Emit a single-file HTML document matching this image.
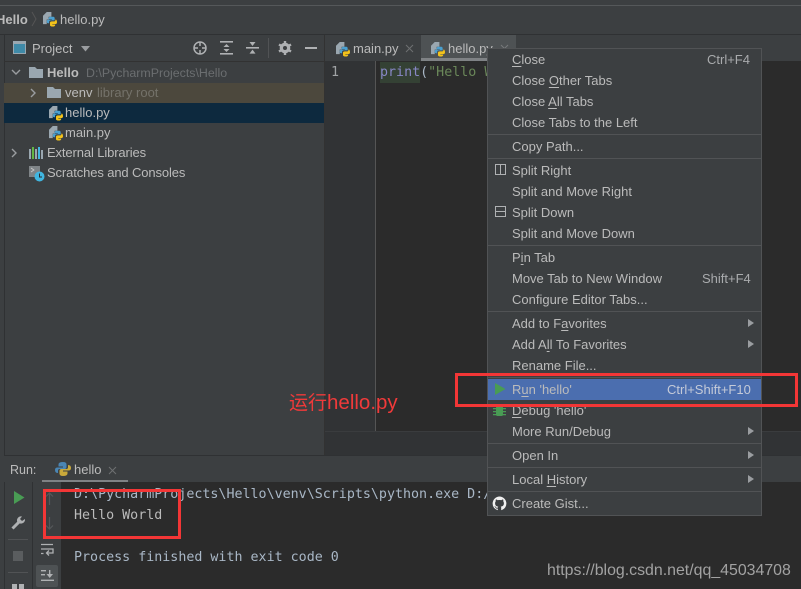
<!DOCTYPE html>
<html><head><meta charset="utf-8">
<style>
html,body{margin:0;padding:0;background:#3c3f41}
#r{position:relative;width:801px;height:589px;overflow:hidden;background:#3c3f41;font-family:"Liberation Sans","Noto Sans CJK SC",sans-serif;font-size:13px;color:#bbbbbb}
#r div{position:absolute}
.t{white-space:pre;line-height:20px;height:20px}
.n{letter-spacing:-.12px}
.m{font-family:"DejaVu Sans Mono","Liberation Mono",monospace;font-size:13.33px;white-space:pre;line-height:20px;height:20px}
u{text-underline-offset:2px}
.s{position:absolute;left:0;right:0;height:1px;background:#515355}
svg{position:absolute;overflow:visible}
#menu .t{margin-top:1px}
</style></head><body>
<svg width="0" height="0" style="position:absolute"><defs>
<g id="py">
<path d="M0 4 L4 0 H9 V5 H6 V8 H4 V13 H0Z" fill="#9aa7b0"/>
<path d="M6 7 Q6 5 8 5 H11 Q12.5 5 12.5 7 V9 H8.5 Q6.5 9 6.5 11 V12 H5.5 Q4 12 4 10 Q4 8 6 8 H9.5 V7.5 H6Z" fill="#4a9fcf"/>
<path d="M13.3 8 Q15 8 15 11 Q15 13 13 13 H10 V13.5 H13 V14 Q13 15.5 10.5 15.5 Q7.5 15.5 7.5 14 V11.5 Q7.5 10 9.5 10 H11.5 Q13.3 10 13.3 8.5Z" fill="#f2c21b"/>
</g>
<g id="folder"><path d="M0 0 H6 L8 2 H14 V11 H0Z" fill="#9aa7b0"/></g>
</defs></svg>
<div id="r">
<!-- top -->
<div style="left:0;top:0;width:801px;height:5px;background:#3c3f41"></div>
<div style="left:0;top:5px;width:801px;height:1px;background:#55585a"></div>
<div style="left:0;top:34px;width:801px;height:1px;background:#2f3133"></div>
<div class="t" style="left:-4px;top:10px;font-weight:bold">Hello</div>
<svg style="left:31px;top:12px" width="6" height="15"><path d="M1 0 L5 7 L1 14" fill="none" stroke="#555" stroke-width="1"/></svg>
<svg style="left:43px;top:12px" width="14" height="15" viewBox="0 0 15 16"><use href="#py"/></svg>
<div class="t" style="left:60px;top:10px">hello.py</div>

<!-- project panel -->
<div style="left:0;top:35px;width:4px;height:420px;background:#3c3f41;border-right:1px solid #2f3133"></div>
<div style="left:4px;top:61px;width:320px;height:1px;background:#323232"></div>
<div style="left:324px;top:35px;width:1px;height:420px;background:#323232"></div>
<svg style="left:13px;top:41px" width="14" height="13"><rect x=".5" y=".5" width="12" height="12" fill="#3f8aa8" stroke="#9aa7b0"/><rect x="1" y="1" width="11" height="2" fill="#9aa7b0"/></svg>
<div class="t" style="left:32px;top:39px">Project</div>
<svg style="left:81px;top:46px" width="9" height="6"><path d="M0 0 H9 L4.5 5.5Z" fill="#9a9da0"/></svg>
<!-- toolbar icons -->
<svg style="left:193px;top:41px" width="14" height="14" fill="none" stroke="#afb1b3" stroke-width="1.5"><circle cx="7" cy="7" r="6"/><path d="M7 1 V5 M7 9 V13 M1 7 H5 M9 7 H13"/></svg>
<svg style="left:220px;top:41px" width="13" height="14" fill="#afb1b3"><rect width="13" height="1.6"/><rect y="12" width="13" height="1.6"/><path d="M6.5 3 L9.5 6 H3.5Z M6.5 11 L3.5 8 H9.5Z"/></svg>
<svg style="left:246px;top:41px" width="13" height="14" fill="#afb1b3"><rect y="6" width="13" height="1.6"/><path d="M6.5 5 L3.5 1 H9.5Z M6.5 8.6 L9.5 12.6 H3.5Z"/></svg>
<div style="left:268px;top:38px;width:1px;height:20px;background:#515355"></div>
<svg style="left:278px;top:41px" width="14" height="14"><circle cx="7" cy="7" r="3.8" fill="none" stroke="#afb1b3" stroke-width="3"/><path d="M7 0 V14 M1 3.5 L13 10.5 M1 10.5 L13 3.5" stroke="#afb1b3" stroke-width="2.4"/><circle cx="7" cy="7" r="2" fill="#3c3f41"/></svg>
<div style="left:305px;top:47px;width:12px;height:2px;background:#afb1b3"></div>
<!-- rows -->
<div style="left:4px;top:83px;width:320px;height:20px;background:#4c483d"></div>
<div style="left:4px;top:103px;width:320px;height:20px;background:#0d293e"></div>
<svg style="left:11px;top:69px" width="10" height="7"><path d="M1 1 L5 5 L9 1" fill="none" stroke="#9a9da0" stroke-width="1.4"/></svg>
<svg style="left:29px;top:67px" width="14" height="11"><use href="#folder"/></svg>
<div class="t" style="left:47px;top:63px;font-weight:bold">Hello</div>
<div class="t" style="left:86px;top:63px;color:#6b6e70;font-size:12.4px">D:\PycharmProjects\Hello</div>
<svg style="left:30px;top:88px" width="7" height="10"><path d="M1 1 L5 5 L1 9" fill="none" stroke="#9a9da0" stroke-width="1.4"/></svg>
<svg style="left:47px;top:87px" width="14" height="11"><use href="#folder"/></svg>
<div class="t" style="left:65px;top:83px">venv</div>
<div class="t" style="left:97px;top:83px;color:#74726a">library root</div>
<svg style="left:49px;top:106px" width="14" height="15" viewBox="0 0 15 16"><use href="#py"/></svg>
<div class="t" style="left:65px;top:103px">hello.py</div>
<svg style="left:49px;top:126px" width="14" height="15" viewBox="0 0 15 16"><use href="#py"/></svg>
<div class="t" style="left:65px;top:123px">main.py</div>
<svg style="left:11px;top:148px" width="7" height="10"><path d="M1 1 L5 5 L1 9" fill="none" stroke="#9a9da0" stroke-width="1.4"/></svg>
<svg style="left:29px;top:147px" width="14" height="12"><rect x="0" y="2" width="2" height="10" fill="#9aa7b0"/><rect x="3" y="0" width="2" height="12" fill="#62b543"/><rect x="6" y="2" width="2" height="10" fill="#9aa7b0"/><rect x="9" y="0" width="2" height="12" fill="#40b6e0"/><rect x="12" y="3" width="2" height="9" fill="#9aa7b0"/></svg>
<div class="t n" style="left:47px;top:143px">External Libraries</div>
<svg style="left:29px;top:166px" width="16" height="16"><path d="M0 0 H11 V6 A5 5 0 0 0 6 11 H0Z" fill="#7f8487"/><path d="M2 2 L5 4 L2 6" fill="none" stroke="#ccc" stroke-width=".8"/><circle cx="10.5" cy="10.5" r="5" fill="#40b6e0"/><path d="M10.5 7.5 V11 H13" fill="none" stroke="#2b2b2b" stroke-width="1"/></svg>
<div class="t n" style="left:47px;top:163px">Scratches and Consoles</div>

<!-- tabs -->
<div style="left:325px;top:35px;width:476px;height:26px;background:#3c3f41"></div>
<div style="left:421px;top:35px;width:95px;height:26px;background:#4e5254"></div>
<div style="left:421px;top:58px;width:95px;height:3px;background:#7f8285"></div>
<svg style="left:336px;top:42px" width="14" height="15" viewBox="0 0 15 16"><use href="#py"/></svg>
<div class="t" style="left:353px;top:39px">main.py</div>
<svg style="left:405px;top:44px" width="9" height="9"><path d="M1 1 L8 8 M8 1 L1 8" stroke="#6e7072" stroke-width="1"/></svg>
<svg style="left:431px;top:42px" width="14" height="15" viewBox="0 0 15 16"><use href="#py"/></svg>
<div class="t" style="left:448px;top:39px">hello.py</div>
<svg style="left:500px;top:44px" width="9" height="9"><path d="M1 1 L8 8 M8 1 L1 8" stroke="#77797b" stroke-width="1"/></svg>

<!-- editor -->
<div style="left:325px;top:61px;width:476px;height:370px;background:#2b2b2b"></div>
<div style="left:325px;top:61px;width:50px;height:370px;background:#313335"></div>
<div style="left:375px;top:61px;width:1px;height:370px;background:#555555"></div>
<div style="left:325px;top:431px;width:476px;height:24px;background:#313335;border-top:1px solid #3a3c3e;box-sizing:border-box"></div>
<div style="left:380px;top:62px;width:40px;height:21px;background:#344134"></div>
<div class="m" style="left:331px;top:63px;color:#a0a3a5">1</div>
<div class="m" style="left:380px;top:63px;color:#a9b7c6"><span style="color:#8888c6">print</span>(<span style="color:#6a8759">"Hello W</span></div>

<!-- run panel -->
<div style="left:4px;top:455px;width:797px;height:1px;background:#2f3133"></div>
<div style="left:0;top:456px;width:801px;height:26px;background:#3c3f41"></div>
<div style="left:42px;top:480px;width:86px;height:3px;background:#7f8285"></div>
<div class="t" style="left:10px;top:460px;font-size:12.5px">Run:</div>
<svg style="left:55px;top:461px" width="16" height="16"><path d="M8 1 Q3.5 1 3.5 3.5 V5.5 H8 V6.5 H2.5 Q0 6.5 0 9 Q0 12 3 12 V9.5 Q3 8 5 8 H9.5 Q11.5 8 11.5 6 V3.5 Q11.5 1 8 1Z" fill="#4a86b5"/><path d="M8 15 Q12.5 15 12.5 12.5 V10.5 H8 V9.5 H13.5 Q16 9.5 16 7 Q16 4 13 4 V6.5 Q13 8 11 8 H6.5 Q4.5 8 4.5 10 V12.5 Q4.5 15 8 15Z" fill="#c9a93a"/></svg>
<div class="t" style="left:74px;top:460px">hello</div>
<svg style="left:108px;top:466px" width="9" height="9"><path d="M1 1 L8 8 M8 1 L1 8" stroke="#6e7072" stroke-width="1"/></svg>

<div style="left:0;top:482px;width:801px;height:107px;background:#2b2b2b"></div>
<div style="left:0;top:482px;width:4px;height:107px;background:#3c3f41;border-right:1px solid #2f3133"></div>
<div style="left:5px;top:482px;width:27px;height:107px;background:#3c3f41"></div>
<div style="left:32px;top:482px;width:1px;height:107px;background:#2f3133"></div>
<div style="left:33px;top:482px;width:28px;height:107px;background:#3c3f41"></div>
<svg style="left:14px;top:491px" width="11" height="13"><path d="M0 0 L10.5 6.5 L0 13Z" fill="#499c54"/></svg>
<svg style="left:11px;top:515px" width="15" height="15"><path d="M1.5 13.5 L8 7" stroke="#afb1b3" stroke-width="3"/><path d="M7 8 A4 4 0 0 1 11 1.5 L9 4 L11 6 L14 4 A4 4 0 0 1 8 8Z" fill="#afb1b3"/></svg>
<div style="left:8px;top:539px;width:20px;height:1px;background:#515355"></div>
<div style="left:13px;top:551px;width:10px;height:10px;background:#5a5d5f"></div>
<div style="left:8px;top:572px;width:20px;height:1px;background:#515355"></div>
<div style="left:12px;top:584px;width:5px;height:5px;background:#afb1b3"></div>
<div style="left:19px;top:584px;width:5px;height:5px;background:#afb1b3"></div>
<svg style="left:44px;top:492px" width="11" height="14" fill="none" stroke="#55585a" stroke-width="1.2"><path d="M5.5 13 V1 M2 4.5 L5.5 1 L9 4.5"/></svg>
<svg style="left:44px;top:516px" width="11" height="14" fill="none" stroke="#55585a" stroke-width="1.2"><path d="M5.5 1 V13 M2 9.5 L5.5 13 L9 9.5"/></svg>
<svg style="left:40px;top:543px" width="14" height="14" fill="none" stroke="#afb1b3" stroke-width="1.3"><path d="M1 1.5 H13 M1 6 H13 V10 H7 M9 7.5 L6.5 10 L9 12.5 M1 10.5 H3.5"/></svg>
<div style="left:36px;top:565px;width:22px;height:22px;background:#4e5254;border-radius:2px"></div>
<svg style="left:41px;top:570px" width="13" height="12" fill="#afb1b3"><rect x="0" y="0" width="5" height="1.4"/><rect x="0" y="4" width="4" height="1.4"/><rect x="0" y="9.6" width="13" height="1.4"/><rect x="8" y="0" width="1.4" height="5"/><path d="M5.5 4 H12 L8.7 8Z"/></svg>

<div class="m" style="left:74px;top:485px;color:#a9b7c6">D:\PycharmProjects\Hello\venv\Scripts\python.exe D:/</div>
<div class="m" style="left:74px;top:506px;color:#bbbbbb">Hello World</div>
<div class="m" style="left:74px;top:548px;color:#a9b7c6">Process finished with exit code 0</div>

<!-- annotation rect 2 -->
<div style="left:43px;top:489px;width:132px;height:44px;border:3px solid #f33636"></div>
<div class="t" style="left:289px;top:392px;color:#f03a3a;font-size:19px;line-height:22px;height:22px">运行<span style="font-size:20.5px">hello.py</span></div>

<!-- watermark -->
<div class="t" style="left:547px;top:561px;font-size:15.9px;color:#a2a2a2">https://blog.csdn.net/qq_45034708</div>

<!-- menu -->
<div id="menu" style="left:487px;top:48px;width:273px;height:466px;background:#3c3f41;border:1px solid #515355">
<div class="s" style="top:85px"></div>
<div class="s" style="top:109px"></div>
<div class="s" style="top:196px"></div>
<div class="s" style="top:262px"></div>
<div class="s" style="top:328px"></div>
<div class="s" style="top:394px"></div>
<div class="s" style="top:418px"></div>
<div class="s" style="top:442px"></div>
<div style="left:0;top:330px;width:273px;height:21px;background:#4b6eaf"></div>
<div class="t" style="left:24px;top:0px"><u>C</u>lose</div>
<div class="t" style="left:219px;top:0px;color:#a9abad">Ctrl+F4</div>
<div class="t" style="left:24px;top:21px">Close <u>O</u>ther Tabs</div>
<div class="t" style="left:24px;top:42px">Close <u>A</u>ll Tabs</div>
<div class="t" style="left:24px;top:63px">Close Tabs to the Left</div>
<div class="t" style="left:24px;top:87px">Copy Path...</div>
<div class="t" style="left:24px;top:111px">Split Right</div>
<div class="t" style="left:24px;top:132px">Split and Move Right</div>
<div class="t" style="left:24px;top:153px">Split Down</div>
<div class="t" style="left:24px;top:174px">Split and Move Down</div>
<div class="t" style="left:24px;top:198px">P<u>i</u>n Tab</div>
<div class="t" style="left:24px;top:219px">Move Tab to New Window</div>
<div class="t" style="left:214px;top:219px;color:#a9abad">Shift+F4</div>
<div class="t" style="left:24px;top:240px">Configure Editor Tabs...</div>
<div class="t" style="left:24px;top:264px">Add to F<u>a</u>vorites</div>
<div class="t" style="left:24px;top:285px">Add A<u>l</u>l To Favorites</div>
<div class="t" style="left:24px;top:306px">Rename File...</div>
<div class="t" style="left:24px;top:330px">R<u>u</u>n 'hello'</div>
<div class="t" style="left:179px;top:330px;color:#c4cad8">Ctrl+Shift+F10</div>
<div class="t" style="left:24px;top:351px"><u>D</u>ebug 'hello'</div>
<div class="t" style="left:24px;top:372px">More Run/Debug</div>
<div class="t" style="left:24px;top:396px">Open In</div>
<div class="t" style="left:24px;top:420px">Local <u>H</u>istory</div>
<div class="t" style="left:24px;top:444px">Create Gist...</div>
<!-- arrows -->
<svg style="left:260px;top:270px" width="6" height="8"><path d="M0 0 L6 4 L0 8Z" fill="#9a9da0"/></svg>
<svg style="left:260px;top:291px" width="6" height="8"><path d="M0 0 L6 4 L0 8Z" fill="#9a9da0"/></svg>
<svg style="left:260px;top:378px" width="6" height="8"><path d="M0 0 L6 4 L0 8Z" fill="#9a9da0"/></svg>
<svg style="left:260px;top:402px" width="6" height="8"><path d="M0 0 L6 4 L0 8Z" fill="#9a9da0"/></svg>
<svg style="left:260px;top:426px" width="6" height="8"><path d="M0 0 L6 4 L0 8Z" fill="#9a9da0"/></svg>
<!-- icons -->
<svg style="left:7px;top:115px" width="11" height="11" fill="none" stroke="#afb1b3"><rect x=".5" y=".5" width="10" height="10"/><path d="M5.5 0 V11"/></svg>
<svg style="left:7px;top:157px" width="11" height="11" fill="none" stroke="#afb1b3"><rect x=".5" y=".5" width="10" height="10"/><path d="M0 5.5 H11"/></svg>
<svg style="left:7px;top:334px" width="11" height="12"><path d="M0 0 L10.5 6 L0 12Z" fill="#499c54"/></svg>
<svg style="left:5px;top:354px" width="13" height="14" fill="#499c54"><rect x="3" y="3" width="7" height="10" rx="1.5"/><path d="M0 5 H13 V6.3 H0Z M0 8 H13 V9.3 H0Z M0 11 H13 V12.3 H0Z"/></svg>
<svg style="left:4px;top:447px" width="15" height="15"><path d="M7.5 .5 A7 7 0 0 0 5.3 14.1 C5.6 14.2 5.8 14 5.8 13.8 V12.6 C3.9 13 3.5 11.7 3.5 11.7 C3.2 10.9 2.7 10.7 2.7 10.7 C2.1 10.3 2.8 10.3 2.8 10.3 C3.5 10.4 3.8 11 3.8 11 C4.4 12.1 5.4 11.8 5.8 11.6 C5.9 11.1 6.1 10.8 6.3 10.6 C4.7 10.4 3.1 9.8 3.1 7.2 C3.1 6.4 3.4 5.8 3.8 5.3 C3.7 5.1 3.5 4.4 3.9 3.5 C3.9 3.5 4.5 3.3 5.8 4.2 C6.9 3.9 8.1 3.9 9.2 4.2 C10.5 3.3 11.1 3.5 11.1 3.5 C11.5 4.4 11.3 5.1 11.2 5.3 C11.6 5.8 11.9 6.4 11.9 7.2 C11.9 9.8 10.3 10.4 8.7 10.6 C9 10.8 9.2 11.3 9.2 12 V13.8 C9.2 14 9.4 14.2 9.7 14.1 A7 7 0 0 0 7.5 .5Z" fill="#f0f0f0"/></svg>
</div>

<!-- annotation rect 1 (over menu) -->
<div style="left:455px;top:373px;width:337px;height:28px;border:3px solid #f33636"></div>
</div>
</body></html>
